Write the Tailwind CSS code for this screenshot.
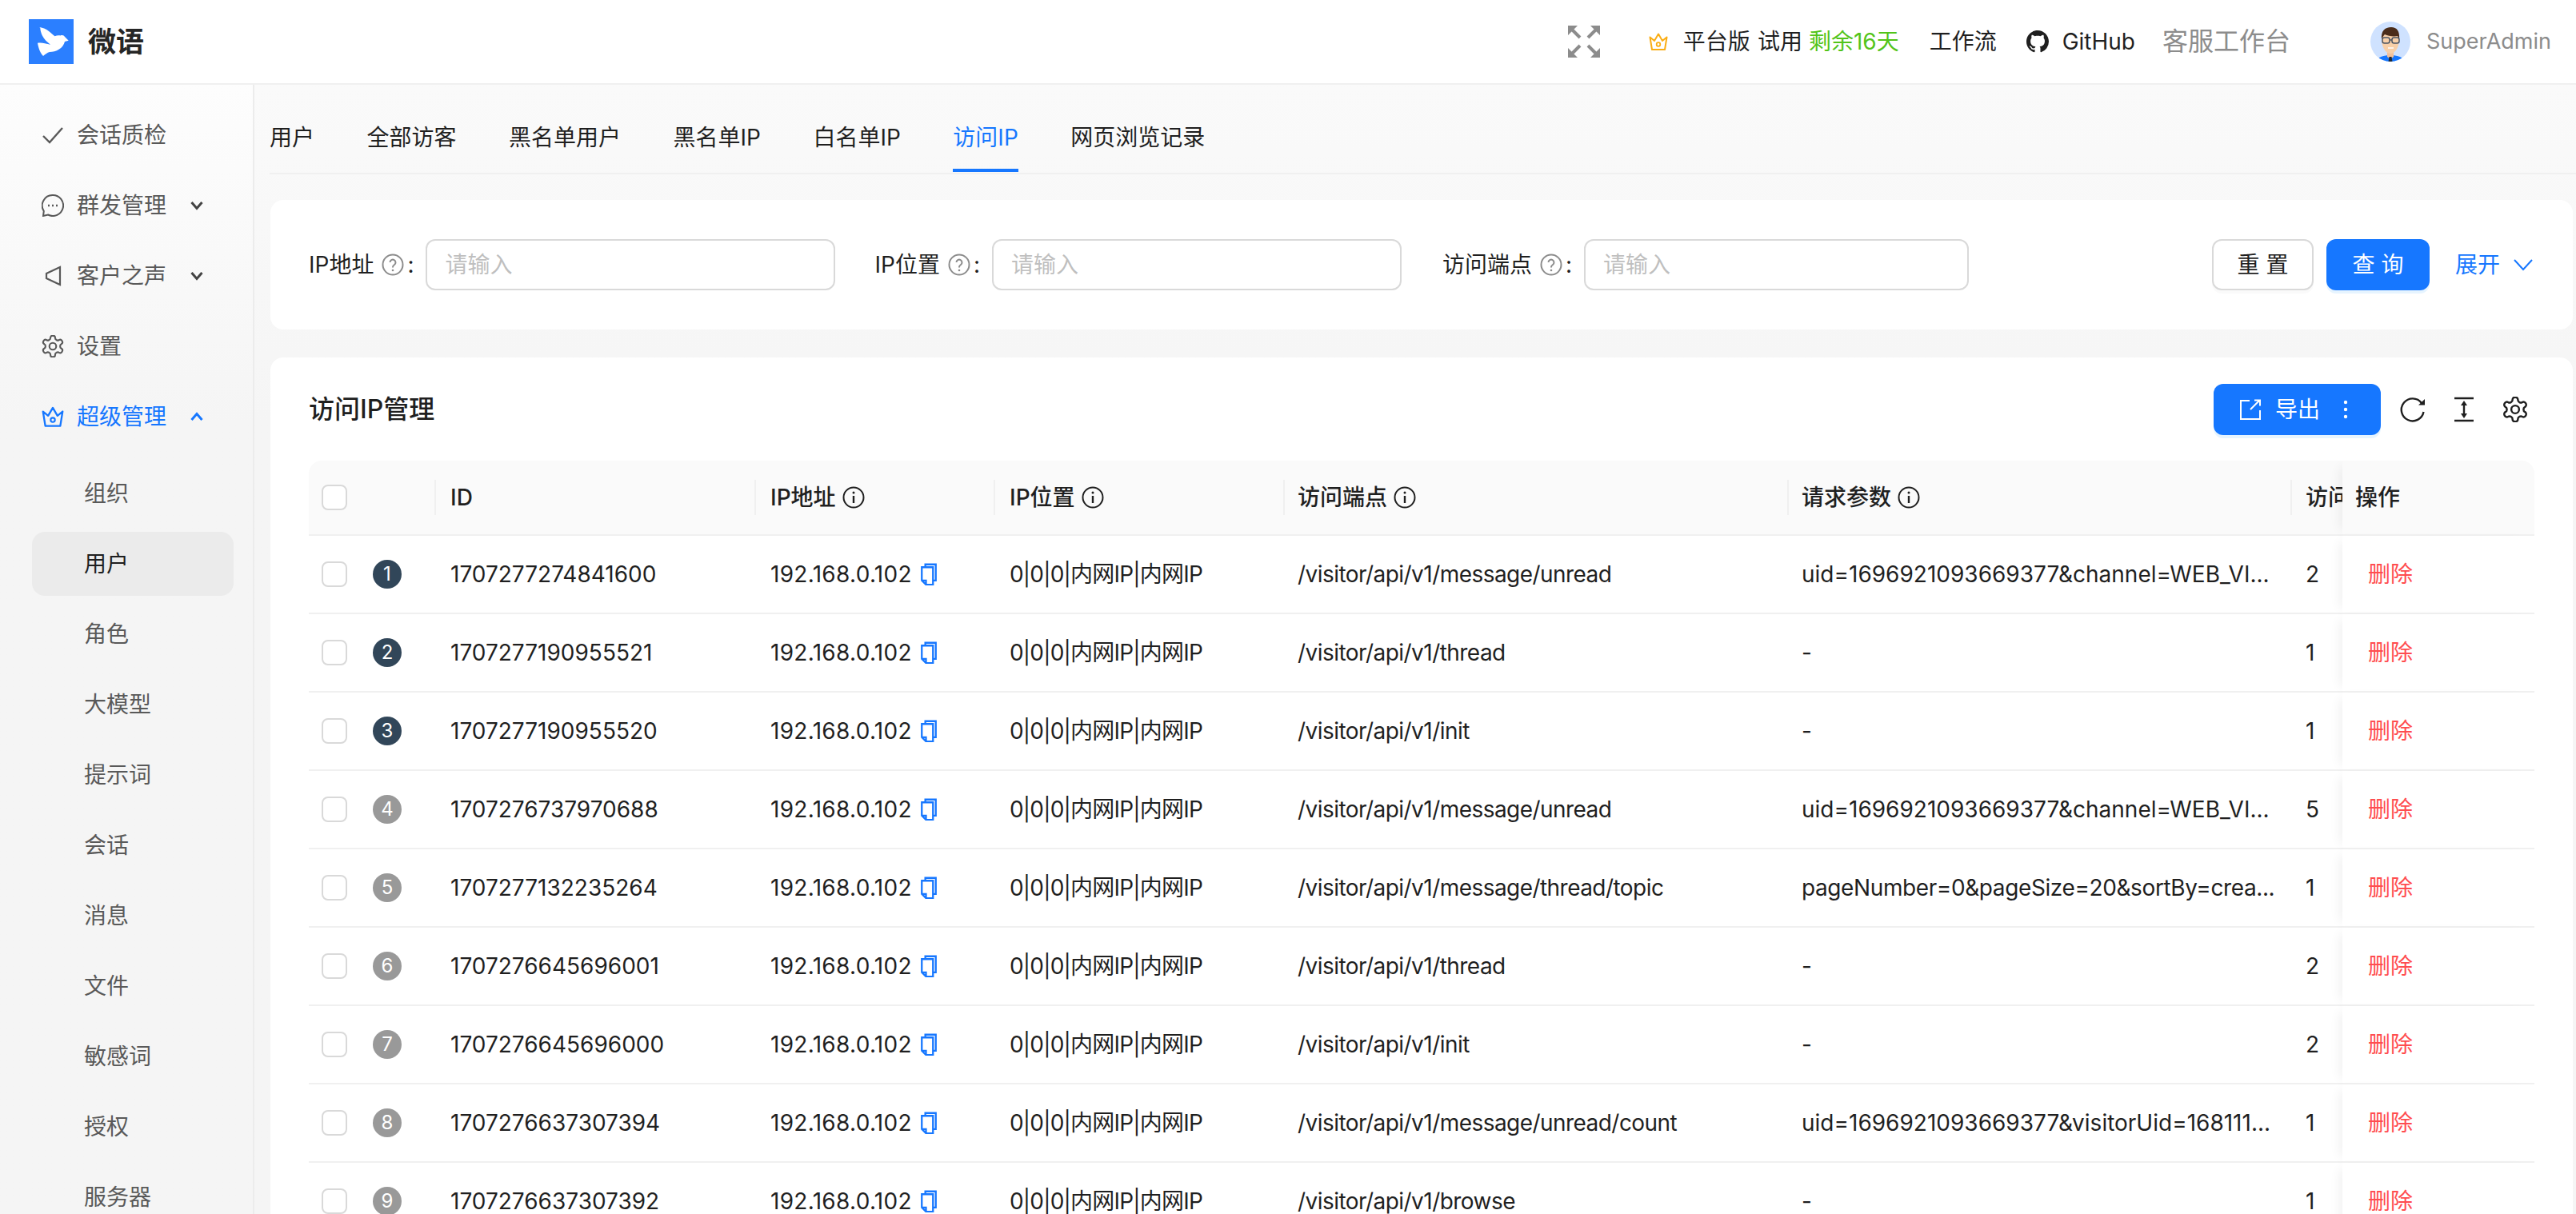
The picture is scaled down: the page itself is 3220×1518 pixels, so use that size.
<!DOCTYPE html>
<html lang="zh-CN">
<head>
    <meta charset="UTF-8">
    <title>访问IP管理 - 微语</title>
    <script src="https://cdn.jsdelivr.net/npm/@tailwindcss/browser@4"></script>
</head>
<body class="h-screen overflow-hidden bg-white text-[28px] text-[#1f1f1f] [font-family:Inter,'Noto_Sans_CJK_SC',sans-serif]">

    <svg class="hidden">
        <symbol id="copy" viewBox="0 0 24 32"><path d="M7 5V2h15v23h-4M2 6h16v25H8l-6-6zM2 25h6v6" fill="none" stroke="#1677ff" stroke-width="2.600"/></symbol>
        <symbol id="help" viewBox="0 0 28 28"><circle cx="14" cy="14" r="12.500" fill="none" stroke="#8c8c8c" stroke-width="2"/><path d="M10.500 11a3.500 3.500 0 1 1 5.500 3c-1.400 1-2 1.600-2 3v.5" fill="none" stroke="#8c8c8c" stroke-width="2"/><circle cx="14" cy="21" r="1.300" fill="#8c8c8c"/></symbol>
        <symbol id="info" viewBox="0 0 28 28"><circle cx="14" cy="14" r="12.500" fill="none" stroke="#1f1f1f" stroke-width="2"/><path d="M14 12v9" stroke="#1f1f1f" stroke-width="2.400"/><circle cx="14" cy="8" r="1.500" fill="#1f1f1f"/></symbol>
        <symbol id="gear" viewBox="1.500 1.500 21 21"><path d="M12.220 2h-.44a2 2 0 0 0-2 2v.18a2 2 0 0 1-1 1.730l-.43.25a2 2 0 0 1-2 0l-.15-.08a2 2 0 0 0-2.730.73l-.22.38a2 2 0 0 0 .73 2.730l.15.1a2 2 0 0 1 1 1.720v.51a2 2 0 0 1-1 1.740l-.15.09a2 2 0 0 0-.73 2.730l.22.38a2 2 0 0 0 2.730.73l.15-.08a2 2 0 0 1 2 0l.43.25a2 2 0 0 1 1 1.730V20a2 2 0 0 0 2 2h.44a2 2 0 0 0 2-2v-.18a2 2 0 0 1 1-1.730l.43-.25a2 2 0 0 1 2 0l.15.08a2 2 0 0 0 2.730-.73l.22-.39a2 2 0 0 0-.73-2.730l-.15-.08a2 2 0 0 1-1-1.740v-.5a2 2 0 0 1 1-1.740l.15-.09a2 2 0 0 0 .73-2.730l-.22-.38a2 2 0 0 0-2.730-.73l-.15.08a2 2 0 0 1-2 0l-.43-.25a2 2 0 0 1-1-1.730V4a2 2 0 0 0-2-2z" fill="none" stroke="currentColor" stroke-width="1.600"/><circle cx="12" cy="12" r="3.200" fill="none" stroke="currentColor" stroke-width="1.600"/></symbol>
        <symbol id="crown" viewBox="0 0 24 24"><path d="M1.500 6.500L7 11l5-8.500L17 11l5.500-4.500L20 22H4z" fill="none" stroke="currentColor" stroke-width="2" stroke-linejoin="round"/><circle cx="12" cy="15.500" r="2.300" fill="none" stroke="currentColor" stroke-width="1.800"/></symbol>
    </svg>

    <!-- topo -->
    <header class="flex h-[106px] items-center border-b-2 border-[#f0f0f0] bg-white pl-9 pr-[31px]">
        <svg class="size-14 shrink-0" viewBox="0 0 56 56">
            <rect width="56" height="56" fill="#2b7fff"/>
            <path d="M13.300 10C18 10.500 22 12.500 25 15c3 2.500 5.500 4.500 7.500 6.300 2-1 4.500-1.500 7-.9 2.500-.9 4.500-.3 5.500 1.600l4.700 4.700-4.700 1.300c-1 4-3.500 7.300-7 9.500-4 2.700-8 3.500-12 3.500-3 .7-5 2.800-8 4.900-3-2.700-6-9.400-7-16.200 3-.5 6-.3 9 .5 3 .5 5 1.200 7 1.500-4-3-8-7-10-11-1.500-3-2.500-6-2.700-9.700z" fill="#fff"/>
        </svg>
        <span class="ml-[18px] text-[35px] font-semibold text-[#262626]">微语</span>

        <svg class="ml-auto size-10" viewBox="0 0 40 40" fill="#8c8c8c" stroke="#8c8c8c">
            <path d="M0 0h12L0 12zM40 0H28l12 12zM0 40h12L0 28zM40 40H28l12-12z" stroke="none"/>
            <path d="M5 5l10 10M35 5L25 15M5 35l10-10M35 35L25 25" stroke-width="4"/>
        </svg>
        <svg class="ml-[61px] size-[24px] text-[#faad14]"><use href="#crown"/></svg>
        <span class="ml-[19px]">平台版</span>
        <span class="ml-[9px]">试用</span>
        <span class="ml-[8px] text-[#52c41a]">剩余16天</span>
        <span class="ml-[38px]">工作流</span>
        <svg class="ml-[37px] size-[28px]" viewBox="0 0 16 16" fill="#1f1f1f"><path d="M8 0C3.580 0 0 3.580 0 8c0 3.540 2.290 6.530 5.470 7.590.4.070.55-.17.55-.38 0-.19-.01-.82-.01-1.490-2.010.37-2.530-.49-2.690-.94-.09-.23-.48-.94-.82-1.130-.28-.15-.68-.52-.01-.53.63-.01 1.080.58 1.230.82.72 1.210 1.870.87 2.330.66.070-.52.28-.87.51-1.070-1.780-.2-3.640-.89-3.640-3.950 0-.87.31-1.590.82-2.150-.08-.2-.36-1.020.08-2.120 0 0 .67-.21 2.200.82.64-.18 1.320-.27 2-.27.68 0 1.360.09 2 .27 1.530-1.040 2.200-.82 2.200-.82.44 1.100.16 1.920.08 2.120.51.56.82 1.270.82 2.150 0 3.070-1.870 3.750-3.650 3.950.29.25.54.73.54 1.480 0 1.070-.01 1.930-.01 2.200 0 .21.15.46.55.38A8.013 8.013 0 0016 8c0-4.420-3.580-8-8-8z"/></svg>
        <span class="ml-[17px]">GitHub</span>
        <span class="ml-[34px] text-[32px] text-[#8c8c8c]">客服工作台</span>
        <svg class="ml-[100px] size-[50px]" viewBox="0 0 50 50">
            <clipPath id="av"><circle cx="25" cy="25" r="25"/></clipPath>
            <g clip-path="url(#av)">
                <rect width="50" height="50" fill="#cfe2ff"/>
                <path d="M8 50c1-6 9-8 17-8s16 2 17 8z" fill="#1677ff"/>
                <path d="M21 38h8v6l-4 3-4-3z" fill="#f2c09a"/>
                <path d="M23.500 44h3l1 6h-5z" fill="#1f2937"/>
                <path d="M14 22c0 10 5 18 11 18s11-8 11-18-22-10-22 0z" fill="#f7cfa8"/>
                <path d="M14 22c-1-10 4-15 12-15 7 0 11 5 10 15l-2-4c-5 1-12 0-16-2-2 2-3 4-4 6z" fill="#4a2c1a"/>
                <rect x="15" y="20" width="9" height="7" rx="2.500" fill="none" stroke="#4b5563" stroke-width="1.500"/>
                <rect x="27" y="20" width="9" height="7" rx="2.500" fill="none" stroke="#4b5563" stroke-width="1.500"/>
                <path d="M24 23h3" stroke="#4b5563" stroke-width="1.500"/>
                <path d="M22 33h7" stroke="#fff" stroke-width="1.500"/>
            </g>
        </svg>
        <span class="ml-5 text-[27px] text-[#8c8c8c]">SuperAdmin</span>
    </header>

    <div class="flex h-[1412px]">
        <!-- menu lateral -->
        <aside class="w-[318px] shrink-0 overflow-hidden border-r-2 border-[#ececec] bg-gradient-to-b from-[#fdfdfd] to-[#f5f5f5] to-30% px-[40px] pt-[19px] text-[#595959]">
            <div class="flex h-[88px] items-center -ml-[14px] pl-[26px]">
                <svg class="w-[28px] h-[28px]" viewBox="0 0 28 28" fill="none" stroke="#595959" stroke-width="2.400"><path d="M2 15l8 8L26 5"/></svg>
                <span class="ml-[16px]">会话质检</span>
            </div>
            <div class="flex h-[88px] items-center -ml-[14px] pl-[26px]">
                <svg class="w-[28px] h-[28px]" viewBox="0 0 28 28" fill="none" stroke="#595959" stroke-width="2"><path d="M14 1a13 13 0 1 1-6 24.500l-6 1.500 .8-6A13 13 0 0 1 14 1z"/><path d="M8 14h2M13 14h2M18 14h2" stroke-width="2.400"/></svg>
                <span class="ml-[16px]">群发管理</span>
                <svg class="ml-[30px] w-[16px] h-[12px]" viewBox="0 0 16 12" fill="none" stroke="#434343" stroke-width="3"><path d="M1.500 2L8 9.500 14.500 2"/></svg>
            </div>
            <div class="flex h-[88px] items-center -ml-[14px] pl-[26px]">
                <svg class="w-[28px] h-[28px]" viewBox="0 0 28 28" fill="none" stroke="#595959" stroke-width="2.200"><path d="M23 3v22L6 17v-6z"/></svg>
                <span class="ml-[16px]">客户之声</span>
                <svg class="ml-[30px] w-[16px] h-[12px]" viewBox="0 0 16 12" fill="none" stroke="#434343" stroke-width="3"><path d="M1.500 2L8 9.500 14.500 2"/></svg>
            </div>
            <div class="flex h-[88px] items-center -ml-[14px] pl-[26px]">
                <svg class="w-[28px] h-[28px] text-[#595959]"><use href="#gear"/></svg>
                <span class="ml-[16px]">设置</span>
            </div>
            <div class="flex h-[88px] items-center -ml-[14px] pl-[26px] text-[#1677ff]">
                <svg class="w-[28px] h-[28px]"><use href="#crown"/></svg>
                <span class="ml-[16px]">超级管理</span>
                <svg class="ml-[30px] w-[16px] h-[12px]" viewBox="0 0 16 12" fill="none" stroke="#1677ff" stroke-width="3"><path d="M1.500 10L8 2.500 14.500 10"/></svg>
            </div>
            <ul class="mt-[8px] w-[252px]">
                <li class="flex h-[88px] items-center pl-[65px]">组织</li>
                <li class="my-[4px] flex h-[80px] items-center rounded-2xl bg-[#ebebeb] pl-[65px] text-[#1f1f1f]">用户</li>
                <li class="flex h-[88px] items-center pl-[65px]">角色</li>
                <li class="flex h-[88px] items-center pl-[65px]">大模型</li>
                <li class="flex h-[88px] items-center pl-[65px]">提示词</li>
                <li class="flex h-[88px] items-center pl-[65px]">会话</li>
                <li class="flex h-[88px] items-center pl-[65px]">消息</li>
                <li class="flex h-[88px] items-center pl-[65px]">文件</li>
                <li class="flex h-[88px] items-center pl-[65px]">敏感词</li>
                <li class="flex h-[88px] items-center pl-[65px]">授权</li>
                <li class="flex h-[88px] items-center pl-[65px]">服务器</li>
            </ul>
        </aside>

        <!-- conteudo -->
        <main class="flex-1 overflow-hidden bg-gradient-to-b from-[#fafafa] to-[#f5f5f5] to-30% pl-[19px]">
            <nav class="flex h-[112px] items-center gap-[65.5px] border-b-2 border-[#f0f0f0] pt-[22px]">
                <span>用户</span>
                <span>全部访客</span>
                <span>黑名单用户</span>
                <span>黑名单IP</span>
                <span>白名单IP</span>
                <span class="relative text-[#1677ff]">访问IP<i class="absolute -bottom-[22px] left-0 h-[4px] w-full bg-[#1677ff]"></i></span>
                <span>网页浏览记录</span>
            </nav>

            <!-- filtros -->
            <section class="mt-[32px] mr-[4px] ml-px flex h-[162px] items-center rounded-2xl bg-white pl-[48px] pr-[50px]">
                <label class="flex items-center">IP地址
                    <svg class="ml-[10px] mr-[4px] size-[28px]"><use href="#help"/></svg>:
                </label>
                <div class="ml-[15px] flex h-[64px] w-[512px] items-center rounded-xl border-2 border-[#d9d9d9] pl-[22px] text-[#bfbfbf]">请输入</div>
                <label class="ml-[49px] flex items-center">IP位置
                    <svg class="ml-[10px] mr-[4px] size-[28px]"><use href="#help"/></svg>:
                </label>
                <div class="ml-[15px] flex h-[64px] w-[512px] items-center rounded-xl border-2 border-[#d9d9d9] pl-[22px] text-[#bfbfbf]">请输入</div>
                <label class="ml-[51px] flex items-center">访问端点
                    <svg class="ml-[10px] mr-[4px] size-[28px]"><use href="#help"/></svg>:
                </label>
                <div class="ml-[15px] flex h-[64px] w-[481px] items-center rounded-xl border-2 border-[#d9d9d9] pl-[22px] text-[#bfbfbf]">请输入</div>
                <button class="ml-auto h-[64px] w-[127px] rounded-xl border-2 border-[#d9d9d9] bg-white shadow-[0_4px_0_rgba(0,0,0,0.02)]">重 置</button>
                <button class="ml-[16px] h-[64px] w-[129px] rounded-xl bg-[#1677ff] text-white shadow-[0_4px_0_rgba(5,145,255,0.1)]">查 询</button>
                <span class="ml-[32px] text-[#1677ff]">展开</span>
                <svg class="ml-[17px] w-[24px] h-[16px]" viewBox="0 0 24 16" fill="none" stroke="#1677ff" stroke-width="2"><path d="M1 2l11 12L23 2"/></svg>
            </section>

            <!-- tabela -->
            <section class="mt-[35px] mr-[4px] ml-px rounded-2xl bg-white pl-[48px] pr-[48px]">
                <div class="flex h-[129px] items-center">
                    <h2 class="text-[32px] font-medium">访问IP管理</h2>
                    <button class="ml-auto flex h-[64px] w-[209px] items-center rounded-xl bg-[#1677ff] pl-[33px] text-white shadow-[0_4px_0_rgba(5,145,255,0.1)]">
                        <svg class="size-[26px]" viewBox="0 0 26 26" fill="none" stroke="#fff" stroke-width="2"><path d="M12 2H1v23h24V14M13 13L24 2M18 1.500h7v7"/></svg>
                        <span class="ml-[18px]">导出</span>
                        <svg class="ml-[29px] w-[6px] h-[24px]" viewBox="0 0 6 24" fill="#fff"><circle cx="3" cy="3" r="2.200"/><circle cx="3" cy="12" r="2.200"/><circle cx="3" cy="21" r="2.200"/></svg>
                    </button>
                    <svg class="ml-[24px] size-[32px]" viewBox="0 0 32 32" fill="none" stroke="#1f1f1f" stroke-width="2.400"><path d="M27 8A14 14 0 1 0 29.500 19"/><path d="M23 10.500h8V3z" fill="#1f1f1f" stroke="none"/></svg>
                    <svg class="ml-[36px] w-[24px] h-[32px]" viewBox="0 0 24 32" fill="none" stroke="#1f1f1f" stroke-width="2.400"><path d="M0 2h24M0 30h24M12 8v16"/><path d="M12 5l-4 6h8zM12 27l-4-6h8z" fill="#1f1f1f" stroke="none"/></svg>
                    <svg class="mr-[8px] ml-[36px] size-[32px] text-[#1f1f1f]"><use href="#gear"/></svg>
                </div>

                <div class="overflow-hidden rounded-t-2xl">
                    <table class="w-[2782px] table-fixed border-separate border-spacing-0">
                        <colgroup>
                            <col class="w-[159px]"><col class="w-[400px]"><col class="w-[299px]"><col class="w-[362px]"><col class="w-[630px]"><col class="w-[629px]"><col class="w-[63px]"><col class="w-[240px]">
                        </colgroup>
                        <thead>
                            <tr class="h-[94px] bg-[#fafafa] text-left">
                                <th class="border-b-2 border-[#f0f0f0] pl-[16px] font-medium"><div class="flex h-[44px] items-center border-r-2 border-[#f0f0f0]"><i class="block size-[32px] rounded-lg border-2 border-[#d9d9d9] bg-white"></i></div></th>
                                <th class="border-b-2 border-[#f0f0f0] font-medium"><div class="flex h-[44px] items-center border-r-2 border-[#f0f0f0] pl-[18px]">ID</div></th>
                                <th class="border-b-2 border-[#f0f0f0] font-medium"><div class="flex h-[44px] items-center border-r-2 border-[#f0f0f0] pl-[18px]">IP地址<svg class="ml-[8px] size-[28px]"><use href="#info"/></svg></div></th>
                                <th class="border-b-2 border-[#f0f0f0] font-medium"><div class="flex h-[44px] items-center border-r-2 border-[#f0f0f0] pl-[18px]">IP位置<svg class="ml-[8px] size-[28px]"><use href="#info"/></svg></div></th>
                                <th class="border-b-2 border-[#f0f0f0] font-medium"><div class="flex h-[44px] items-center border-r-2 border-[#f0f0f0] pl-[16px]">访问端点<svg class="ml-[8px] size-[28px]"><use href="#info"/></svg></div></th>
                                <th class="border-b-2 border-[#f0f0f0] font-medium"><div class="flex h-[44px] items-center border-r-2 border-[#f0f0f0] pl-[16px]">请求参数<svg class="ml-[8px] size-[28px]"><use href="#info"/></svg></div></th>
                                <th class="overflow-hidden border-b-2 border-[#f0f0f0] pl-[17px] font-medium whitespace-nowrap">访问次数</th>
                                <th class="relative border-b-2 border-[#f0f0f0] bg-[#fafafa] pl-[16px] font-medium shadow-[-10px_0_14px_-8px_rgba(0,0,0,0.07)]">操作</th>
                            </tr>
                        </thead>
                        <tbody>
                            <tr class="h-[98px]">
                                <td class="border-b-2 border-[#f0f0f0] pl-[16px]"><div class="flex items-center"><i class="block size-[32px] rounded-lg border-2 border-[#d9d9d9]"></i><b class="ml-[32px] flex size-[36px] items-center justify-center rounded-full bg-[#314659] text-[24px] font-normal text-white">1</b></div></td>
                                <td class="border-b-2 border-[#f0f0f0] pl-[18px]">1707277274841600</td>
                                <td class="border-b-2 border-[#f0f0f0] pl-[18px]"><div class="flex items-center tracking-[0.3px]">192.168.0.102<svg class="ml-[10px] h-[28px] w-[22px]"><use href="#copy"/></svg></div></td>
                                <td class="border-b-2 border-[#f0f0f0] pl-[18px] tracking-[-0.8px]">0|0|0|内网IP|内网IP</td>
                                <td class="border-b-2 border-[#f0f0f0] pl-[16px] tracking-[-0.55px]">/visitor/api/v1/message/unread</td>
                                <td class="border-b-2 border-[#f0f0f0] pl-[16px]">uid=1696921093669377&amp;channel=WEB_VI...</td>
                                <td class="border-b-2 border-[#f0f0f0] pl-[17px]">2</td>
                                <td class="relative border-b-2 border-[#f0f0f0] bg-white pl-[32px] text-[#ff4d4f] shadow-[-10px_0_14px_-8px_rgba(0,0,0,0.07)]">删除</td>
                            </tr>
                            <tr class="h-[98px]">
                                <td class="border-b-2 border-[#f0f0f0] pl-[16px]"><div class="flex items-center"><i class="block size-[32px] rounded-lg border-2 border-[#d9d9d9]"></i><b class="ml-[32px] flex size-[36px] items-center justify-center rounded-full bg-[#314659] text-[24px] font-normal text-white">2</b></div></td>
                                <td class="border-b-2 border-[#f0f0f0] pl-[18px]">1707277190955521</td>
                                <td class="border-b-2 border-[#f0f0f0] pl-[18px]"><div class="flex items-center tracking-[0.3px]">192.168.0.102<svg class="ml-[10px] h-[28px] w-[22px]"><use href="#copy"/></svg></div></td>
                                <td class="border-b-2 border-[#f0f0f0] pl-[18px] tracking-[-0.8px]">0|0|0|内网IP|内网IP</td>
                                <td class="border-b-2 border-[#f0f0f0] pl-[16px] tracking-[-0.55px]">/visitor/api/v1/thread</td>
                                <td class="border-b-2 border-[#f0f0f0] pl-[16px]">-</td>
                                <td class="border-b-2 border-[#f0f0f0] pl-[17px]">1</td>
                                <td class="relative border-b-2 border-[#f0f0f0] bg-white pl-[32px] text-[#ff4d4f] shadow-[-10px_0_14px_-8px_rgba(0,0,0,0.07)]">删除</td>
                            </tr>
                            <tr class="h-[98px]">
                                <td class="border-b-2 border-[#f0f0f0] pl-[16px]"><div class="flex items-center"><i class="block size-[32px] rounded-lg border-2 border-[#d9d9d9]"></i><b class="ml-[32px] flex size-[36px] items-center justify-center rounded-full bg-[#314659] text-[24px] font-normal text-white">3</b></div></td>
                                <td class="border-b-2 border-[#f0f0f0] pl-[18px]">1707277190955520</td>
                                <td class="border-b-2 border-[#f0f0f0] pl-[18px]"><div class="flex items-center tracking-[0.3px]">192.168.0.102<svg class="ml-[10px] h-[28px] w-[22px]"><use href="#copy"/></svg></div></td>
                                <td class="border-b-2 border-[#f0f0f0] pl-[18px] tracking-[-0.8px]">0|0|0|内网IP|内网IP</td>
                                <td class="border-b-2 border-[#f0f0f0] pl-[16px] tracking-[-0.55px]">/visitor/api/v1/init</td>
                                <td class="border-b-2 border-[#f0f0f0] pl-[16px]">-</td>
                                <td class="border-b-2 border-[#f0f0f0] pl-[17px]">1</td>
                                <td class="relative border-b-2 border-[#f0f0f0] bg-white pl-[32px] text-[#ff4d4f] shadow-[-10px_0_14px_-8px_rgba(0,0,0,0.07)]">删除</td>
                            </tr>
                            <tr class="h-[98px]">
                                <td class="border-b-2 border-[#f0f0f0] pl-[16px]"><div class="flex items-center"><i class="block size-[32px] rounded-lg border-2 border-[#d9d9d9]"></i><b class="ml-[32px] flex size-[36px] items-center justify-center rounded-full bg-[#999999] text-[24px] font-normal text-white">4</b></div></td>
                                <td class="border-b-2 border-[#f0f0f0] pl-[18px]">1707276737970688</td>
                                <td class="border-b-2 border-[#f0f0f0] pl-[18px]"><div class="flex items-center tracking-[0.3px]">192.168.0.102<svg class="ml-[10px] h-[28px] w-[22px]"><use href="#copy"/></svg></div></td>
                                <td class="border-b-2 border-[#f0f0f0] pl-[18px] tracking-[-0.8px]">0|0|0|内网IP|内网IP</td>
                                <td class="border-b-2 border-[#f0f0f0] pl-[16px] tracking-[-0.55px]">/visitor/api/v1/message/unread</td>
                                <td class="border-b-2 border-[#f0f0f0] pl-[16px]">uid=1696921093669377&amp;channel=WEB_VI...</td>
                                <td class="border-b-2 border-[#f0f0f0] pl-[17px]">5</td>
                                <td class="relative border-b-2 border-[#f0f0f0] bg-white pl-[32px] text-[#ff4d4f] shadow-[-10px_0_14px_-8px_rgba(0,0,0,0.07)]">删除</td>
                            </tr>
                            <tr class="h-[98px]">
                                <td class="border-b-2 border-[#f0f0f0] pl-[16px]"><div class="flex items-center"><i class="block size-[32px] rounded-lg border-2 border-[#d9d9d9]"></i><b class="ml-[32px] flex size-[36px] items-center justify-center rounded-full bg-[#999999] text-[24px] font-normal text-white">5</b></div></td>
                                <td class="border-b-2 border-[#f0f0f0] pl-[18px]">1707277132235264</td>
                                <td class="border-b-2 border-[#f0f0f0] pl-[18px]"><div class="flex items-center tracking-[0.3px]">192.168.0.102<svg class="ml-[10px] h-[28px] w-[22px]"><use href="#copy"/></svg></div></td>
                                <td class="border-b-2 border-[#f0f0f0] pl-[18px] tracking-[-0.8px]">0|0|0|内网IP|内网IP</td>
                                <td class="border-b-2 border-[#f0f0f0] pl-[16px] tracking-[-0.55px]">/visitor/api/v1/message/thread/topic</td>
                                <td class="border-b-2 border-[#f0f0f0] pl-[16px] tracking-[-0.4px]">pageNumber=0&amp;pageSize=20&amp;sortBy=crea...</td>
                                <td class="border-b-2 border-[#f0f0f0] pl-[17px]">1</td>
                                <td class="relative border-b-2 border-[#f0f0f0] bg-white pl-[32px] text-[#ff4d4f] shadow-[-10px_0_14px_-8px_rgba(0,0,0,0.07)]">删除</td>
                            </tr>
                            <tr class="h-[98px]">
                                <td class="border-b-2 border-[#f0f0f0] pl-[16px]"><div class="flex items-center"><i class="block size-[32px] rounded-lg border-2 border-[#d9d9d9]"></i><b class="ml-[32px] flex size-[36px] items-center justify-center rounded-full bg-[#999999] text-[24px] font-normal text-white">6</b></div></td>
                                <td class="border-b-2 border-[#f0f0f0] pl-[18px]">1707276645696001</td>
                                <td class="border-b-2 border-[#f0f0f0] pl-[18px]"><div class="flex items-center tracking-[0.3px]">192.168.0.102<svg class="ml-[10px] h-[28px] w-[22px]"><use href="#copy"/></svg></div></td>
                                <td class="border-b-2 border-[#f0f0f0] pl-[18px] tracking-[-0.8px]">0|0|0|内网IP|内网IP</td>
                                <td class="border-b-2 border-[#f0f0f0] pl-[16px] tracking-[-0.55px]">/visitor/api/v1/thread</td>
                                <td class="border-b-2 border-[#f0f0f0] pl-[16px]">-</td>
                                <td class="border-b-2 border-[#f0f0f0] pl-[17px]">2</td>
                                <td class="relative border-b-2 border-[#f0f0f0] bg-white pl-[32px] text-[#ff4d4f] shadow-[-10px_0_14px_-8px_rgba(0,0,0,0.07)]">删除</td>
                            </tr>
                            <tr class="h-[98px]">
                                <td class="border-b-2 border-[#f0f0f0] pl-[16px]"><div class="flex items-center"><i class="block size-[32px] rounded-lg border-2 border-[#d9d9d9]"></i><b class="ml-[32px] flex size-[36px] items-center justify-center rounded-full bg-[#999999] text-[24px] font-normal text-white">7</b></div></td>
                                <td class="border-b-2 border-[#f0f0f0] pl-[18px]">1707276645696000</td>
                                <td class="border-b-2 border-[#f0f0f0] pl-[18px]"><div class="flex items-center tracking-[0.3px]">192.168.0.102<svg class="ml-[10px] h-[28px] w-[22px]"><use href="#copy"/></svg></div></td>
                                <td class="border-b-2 border-[#f0f0f0] pl-[18px] tracking-[-0.8px]">0|0|0|内网IP|内网IP</td>
                                <td class="border-b-2 border-[#f0f0f0] pl-[16px] tracking-[-0.55px]">/visitor/api/v1/init</td>
                                <td class="border-b-2 border-[#f0f0f0] pl-[16px]">-</td>
                                <td class="border-b-2 border-[#f0f0f0] pl-[17px]">2</td>
                                <td class="relative border-b-2 border-[#f0f0f0] bg-white pl-[32px] text-[#ff4d4f] shadow-[-10px_0_14px_-8px_rgba(0,0,0,0.07)]">删除</td>
                            </tr>
                            <tr class="h-[98px]">
                                <td class="border-b-2 border-[#f0f0f0] pl-[16px]"><div class="flex items-center"><i class="block size-[32px] rounded-lg border-2 border-[#d9d9d9]"></i><b class="ml-[32px] flex size-[36px] items-center justify-center rounded-full bg-[#999999] text-[24px] font-normal text-white">8</b></div></td>
                                <td class="border-b-2 border-[#f0f0f0] pl-[18px]">1707276637307394</td>
                                <td class="border-b-2 border-[#f0f0f0] pl-[18px]"><div class="flex items-center tracking-[0.3px]">192.168.0.102<svg class="ml-[10px] h-[28px] w-[22px]"><use href="#copy"/></svg></div></td>
                                <td class="border-b-2 border-[#f0f0f0] pl-[18px] tracking-[-0.8px]">0|0|0|内网IP|内网IP</td>
                                <td class="border-b-2 border-[#f0f0f0] pl-[16px] tracking-[-0.55px]">/visitor/api/v1/message/unread/count</td>
                                <td class="border-b-2 border-[#f0f0f0] pl-[16px]">uid=1696921093669377&amp;visitorUid=168111...</td>
                                <td class="border-b-2 border-[#f0f0f0] pl-[17px]">1</td>
                                <td class="relative border-b-2 border-[#f0f0f0] bg-white pl-[32px] text-[#ff4d4f] shadow-[-10px_0_14px_-8px_rgba(0,0,0,0.07)]">删除</td>
                            </tr>
                            <tr class="h-[98px]">
                                <td class="border-b-2 border-[#f0f0f0] pl-[16px]"><div class="flex items-center"><i class="block size-[32px] rounded-lg border-2 border-[#d9d9d9]"></i><b class="ml-[32px] flex size-[36px] items-center justify-center rounded-full bg-[#999999] text-[24px] font-normal text-white">9</b></div></td>
                                <td class="border-b-2 border-[#f0f0f0] pl-[18px]">1707276637307392</td>
                                <td class="border-b-2 border-[#f0f0f0] pl-[18px]"><div class="flex items-center tracking-[0.3px]">192.168.0.102<svg class="ml-[10px] h-[28px] w-[22px]"><use href="#copy"/></svg></div></td>
                                <td class="border-b-2 border-[#f0f0f0] pl-[18px] tracking-[-0.8px]">0|0|0|内网IP|内网IP</td>
                                <td class="border-b-2 border-[#f0f0f0] pl-[16px] tracking-[-0.55px]">/visitor/api/v1/browse</td>
                                <td class="border-b-2 border-[#f0f0f0] pl-[16px]">-</td>
                                <td class="border-b-2 border-[#f0f0f0] pl-[17px]">1</td>
                                <td class="relative border-b-2 border-[#f0f0f0] bg-white pl-[32px] text-[#ff4d4f] shadow-[-10px_0_14px_-8px_rgba(0,0,0,0.07)]">删除</td>
                            </tr>
                        </tbody>
                    </table>
                </div>
            </section>
        </main>
    </div>
</body>
</html>
